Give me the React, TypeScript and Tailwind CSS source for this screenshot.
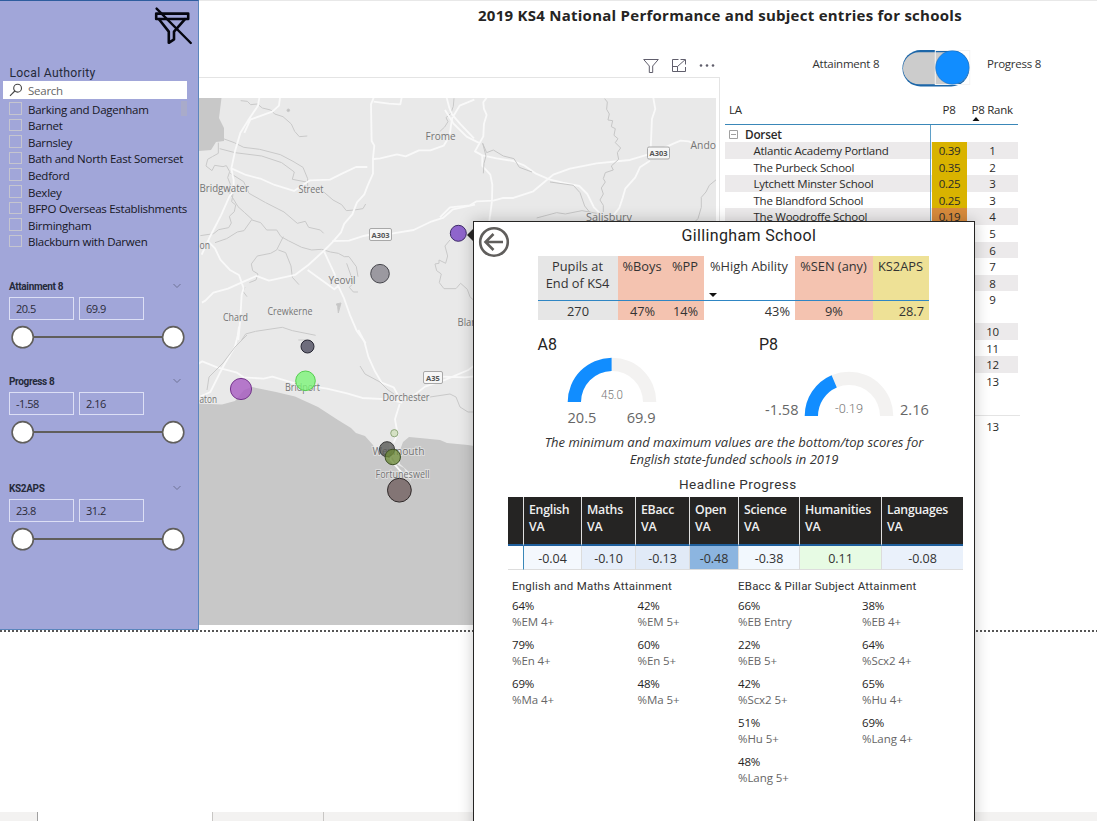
import type { ReactNode } from "react";

const authorities = [
  "Barking and Dagenham",
  "Barnet",
  "Barnsley",
  "Bath and North East Somerset",
  "Bedford",
  "Bexley",
  "BFPO Overseas Establishments",
  "Birmingham",
  "Blackburn with Darwen",
];

function ClearFilterIcon() {
  return (
    <svg width="40" height="40" viewBox="0 0 40 40" fill="none" stroke="#05060f" strokeWidth="2.6" strokeLinejoin="round" strokeLinecap="round">
      <rect x="3.2" y="7.6" width="32" height="5.4" />
      <path d="M6 13.200l9.800 12.400v11.2l5.200-3.400v-7.800L32 13.200" />
      <path d="M3.600 2.600l34.200 34.400" strokeWidth="2.4" />
    </svg>
  );
}

function Slicer({ title, min, max, className }: { title: string; min: string; max: string; className: string }) {
  return (
    <div className={`flex flex-col pl-[9px] ${className}`}>
      <div className="flex h-[14px] items-center justify-between pr-[16px]">
        <span className="font-['Roboto',sans-serif] text-[10px] font-bold tracking-[-0.35px] text-[#252a3a]">{title}</span>
        <svg width="10" height="6" viewBox="0 0 10 6" fill="none" stroke="#6f7396" strokeWidth="1">
          <path d="M1.5 1L5 4.5 8.5 1" />
        </svg>
      </div>
      <div className="mt-1 flex gap-[5px]">
        {[min, max].map((v) => (
          <div key={v} className="flex h-[23px] w-[65px] items-center border border-[#dcdff5] pl-[6px] text-[11px] tracking-[-0.5px] text-[#2b2b3a]">
            {v}
          </div>
        ))}
      </div>
      <svg className="mt-[5px]" width="180" height="24" viewBox="0 0 180 24">
        <path d="M14 12h150" stroke="#605e5c" strokeWidth="2" />
        <circle cx="13.7" cy="12.2" r="10.6" fill="#fff" stroke="#605e5c" strokeWidth="1.6" />
        <circle cx="164.2" cy="12.2" r="10.6" fill="#fff" stroke="#605e5c" strokeWidth="1.6" />
      </svg>
    </div>
  );
}

function Sidebar() {
  return (
    <aside className="flex h-[630px] w-[199px] shrink-0 flex-col border-t border-r border-b border-[#5b86bd] border-t-[#2e5d9e] bg-[#a1a6d9]">
      <div className="flex justify-end pt-[5px] pr-[5px]">
        <ClearFilterIcon />
      </div>
      <div className="mt-[19px] h-[16px] pl-[9.5px] font-['Roboto',sans-serif] text-[12.2px] leading-[16px] tracking-[0.3px] text-[#252a3a]">Local Authority</div>
      <div className="ml-[3px] flex h-[18px] w-[184px] items-center bg-white pl-[6px]">
        <svg width="14" height="14" viewBox="0 0 14 14" fill="none" stroke="#444" strokeWidth="1.1">
          <circle cx="8.6" cy="5.2" r="3.9" />
          <path d="M5.8 8L1 12.8" />
        </svg>
        <span className="ml-[5px] pt-px text-[11.5px] tracking-[-0.25px] text-[#666]">Search</span>
      </div>
      <div className="mt-[2px] flex justify-between pr-[11px]">
        <ul className="pl-[9px]">
          {authorities.map((a) => (
            <li key={a} className="flex h-[16.6px] items-center text-[11.5px] tracking-[-0.26px] whitespace-nowrap text-[#16161f]">
              <span className="relative -top-px mr-[6.5px] h-[12.5px] w-[12.5px] border border-[#c5c5cf]" />
              {a}
            </li>
          ))}
        </ul>
        <div className="-ml-2 h-[15px] w-[6px] bg-[#a9abca]" />
      </div>
      <Slicer title="Attainment 8" min="20.5" max="69.9" className="mt-[29px]" />
      <Slicer title="Progress 8" min="-1.58" max="2.16" className="mt-[25px]" />
      <Slicer title="KS2APS" min="23.8" max="31.2" className="mt-[37px]" />
    </aside>
  );
}

const towns: [string, number, number, number][] = [
  ["Frome", 425.5, 140, 30],
  ["Ando", 690.5, 149, 25.5],
  ["Bridgwater", 199.5, 191.5, 49.5],
  ["Street", 298.5, 192.5, 25],
  ["Salisbury", 586, 220.5, 46],
  ["on", 199.5, 249, 10.5],
  ["Yeovil", 328.5, 284, 27],
  ["Crewkerne", 267.5, 315, 45],
  ["Chard", 223, 320.5, 25],
  ["Blandford", 457.5, 325.5, 44],
  ["Bridport", 285, 390.5, 35],
  ["aton", 199.5, 402.5, 17.5],
  ["Dorchester", 382.5, 401, 47],
  ["Weymouth", 372.5, 454.5, 52],
  ["Fortuneswell", 375.5, 478, 54],
];

const shields: [string, number, number, number][] = [
  ["A303", 369.5, 228.5, 22],
  ["A303", 647.5, 147, 22],
  ["A35", 423.5, 371.5, 19],
];

const schools: [number, number, number, string, string][] = [
  [458.3, 233.3, 8, "#7640c4", "#3d2a68"],
  [380, 273.7, 9.3, "#85838c", "#46464c"],
  [307.5, 346.5, 6.5, "#4c4a5e", "#262633"],
  [241, 389, 10.6, "#a658c2", "#74348c"],
  [305.5, 380.8, 9.8, "#7af576", "#55cf50"],
  [394.3, 433.2, 3.6, "#cfdfba", "#8fa77c"],
  [387, 449.2, 7.5, "#555652", "#383838"],
  [392.8, 457, 7.7, "#6d8a38", "#3f5127"],
  [399.4, 490.2, 11.9, "#6f5d5d", "#302a2a"],
];

function SchoolMap() {
  return (
    <svg width="517" height="527" viewBox="199 98 517 527" className="bg-[#e9e9e9]">
      <g fill="#c8c8c8">
        <path d="M199 98h22.5l-2.500 20 5 10v13l-8 1-5 8-12 1z" />
        <path d="M199 403.500L222 404.500L235 401 244 390 252 387 276 392 295 396.500 318 407 338 420 351 428 356 433 365 436 373 445 376 451 391 455 394 460 396 464 404 468 411 482 409 472 400 464 399 453 403 442 409 437 420 438 440 440 447 443 468 445 480 447V626H199z" />
      </g>
      <g transform="translate(195 50) scale(.3333)" fill="none" stroke="#c9c9c9" strokeWidth="3" strokeLinejoin="round">
        <path d="M137 152l20 2 10 10 20-2 15 12 25 6 12 12 25 8 25 22 10 22 14 16 24-2M85 266l33 12 28 14 48 6 62 16 38 20 30 18 14 34 0 22M74 296l46 12 80 10 60 20 38 28-6 22 42 8M70 278l0 32-18 10-14 8-5 20 18 14 8-16 25 4 10-3 10 18-6 18 8 20 -10 22 18 8-4 22 12 10-4 20-15 14 6 20-8 14-30 6-15 12-40 6M106 370l40 25 16 35 50 28 55 28 40 34 24-6 10 18 35 8 10 10M105 430l24 40 20 18 22 20-24 34-20 4-32 20-35 12M171 510l26 8 18 22 30 0 13 20 22 12 40 20 30 8 30-2 26 8 24 4 18 10 14 0 22 30 5 30M265 560l-20 40-18 10-40 8-18 24 4 20 16 10-6 18-20 8M250 600l22 8 16 40 4 34 20 22M384 424l30 26 26 14 14 18 24-2 26-4 8-14M455 640l14 40 4 22-10 10 12 14h14M777 145l-2 24-8 22-14 12 6 12-10 16-15 14M765 570l-15 18 8 30-6 22-20-10 0 10-12 2 5 20 14 10-6 26 14 18 36 0 14-16 20 18 8 22 14 14M140 870l12-18 30-8 80-12 30 10 70 14M310 870l25 0M150 712l-6 12 12 16" />
        <path d="M424 762l14-3-8 30-2-19z" fill="#c6c6c6" />
        <circle cx="280" cy="181" r="4" fill="#c0c0c0" />
      </g>
      <g transform="translate(195 50) scale(.3333)" fill="none" stroke="#f9f9f9" strokeWidth="5.500" strokeLinejoin="round">
        <path d="M193 143l-4 24-27 40-26 42-16 55-11 52 7 34 0 32-14 20-24 54-32 62-26 56M255 143l-3 24-20 18-66 24-18 40M109 355l44 20 46 12 40 18 58 18 48-32 60-2 36-18 42-20h34M536 143l-8 20 2 110 8 14-4 38 0 46-16 36-10 26-22 24-14 36-24 28-10 26-26 30-26 26-46 42-40 30-78 17-38-14-45 20-40 18-44 12-24 24-10 6M536 155l46 6 34 2 4-20M536 327l20-2 50-12 26 6 40-18 34 0 40-14 18-30 4-30 4-24 22-36 44-18M755 143l8 30 8 20 26 30 40 42M412 573l50-1 44-14 30-6 58-2 62-10 50-24 38-12 30-26 66-14M40 575l20 20 16 34 30 32 26 14 14 40-6 20-4 70-6 65M388 606l12 26 18 38 8 30 20 42 20 56 20 46 26 36M338 660l80 58 14-12" />
        <g transform="translate(0 840)">
          <path d="M132-10l-4 28-8 32-30 50-16 30-28 56-30 14M0 108l22-14 44 18 60 16 20 14 60 4 26-6 80 24 84 12 60 14 46 14 80 4 40 10M490 0l18 34 12 46 20 44 20 34 36 14 12 22 4 20 48-20 30-24 60-20 70-30 40-30M740 140l70 2 40-4M614 222l-14 46 8 44-12 26M585 340l2 50 26 30 14 14" />
        </g>
        <g transform="translate(735 0)">
          <path d="M140 143l-10 14 2 20 8 18-8 26-2 38-25 45 22 12 0 32 24 26 6 30-1 50-8 60M15 180l25 40 40 40 40 20M127 316l43 9 50 8 34 14 34 24 40 17 40 10 50 10 24 24 20 40 22 22M0 502l30-30 60-6 20-12 50-2 30-8h30l60-20 36-30 24-20 50-18 80-16 100-10 66-20 66-30 20-8 24 2 20 8 30 4 20 6 20-6M640 143l6 34-10 30-4 92M630 332l-30 20-14 30-30 34-8 28-10 30-18 22" />
        </g>
      </g>
      <g transform="translate(440 50) scale(.3333)" fill="none" stroke="#c6c6c6" strokeWidth="3">
        <path d="M494 146l8 10-2 22 8 14-4 18 14 2-4 18 12 6-4 20 12 10-8 12 16 16-10 14 4 20-22 20 6 12-24 8-6 18 6 10-12 18 6 18-10 18 10 16 0 20M130 370l2-30 6-22-10-38 12 28 20-8 30 18 32 8 16 26 38 14M330 396l70 10 20 22 14 40 16 20M830 388l-22 18-10 20-14 16 0 30-10 34-10 10M290 504l60-16 26 4 50-10 44 8" />
      </g>
      <path d="M360 366l5 8 15 8 8 8 6 4M430 397l20-3 6 3 4 10 8 5 5 0M207 390l2-13 14-14 12-16 12-12" fill="none" stroke="#c9c9c9" />
      <g fontFamily="'Open Sans', sans-serif" fontSize="10" fill="#757575" stroke="#ececec" strokeWidth="2" strokeOpacity=".6" paintOrder="stroke">
        {towns.map(([n, x, y, w]) => (
          <text key={n} x={x} y={y} textLength={w} lengthAdjust="spacingAndGlyphs">{n}</text>
        ))}
      </g>
      {shields.map(([n, x, y, w]) => (
        <g key={x}>
          <rect x={x} y={y} width={w} height="12" rx="1.500" fill="#f6f6f6" stroke="#a8a8a8" />
          <text x={x + w / 2} y={y + 9} textAnchor="middle" fontSize="7.500" fontWeight="700" fontFamily="'Open Sans', sans-serif" fill="#555">{n}</text>
        </g>
      ))}
      {schools.map(([x, y, r, fill, stroke]) => (
        <circle key={x} cx={x} cy={y} r={r} fill={fill} fillOpacity=".78" stroke={stroke} strokeWidth="1" />
      ))}
    </svg>
  );
}

function MapPanel() {
  return (
    <section className="flex w-[521px] shrink-0 flex-col">
      <div className="mt-[51px] flex h-[25px] items-center justify-end gap-[13px] pr-[5px] pt-[4px]">
        <svg width="16" height="14" viewBox="0 0 16 14" fill="none" stroke="#605e6c">
          <path d="M.7.500h14.600L9.700 7v6.500H6.300V7z" />
        </svg>
        <svg width="14" height="13" viewBox="0 0 14 13" fill="none" stroke="#605e6c">
          <path d="M6.500.500H.500v12h13V8M.500 7.500h5v5M5.500 7.500L13 .800M8.500.500h5v5" />
        </svg>
        <svg width="16" height="4" viewBox="0 0 16 4" fill="#605e6c">
          <circle cx="2" cy="1.500" r="1.300" />
          <circle cx="8" cy="1.500" r="1.300" />
          <circle cx="14" cy="1.500" r="1.300" />
        </svg>
      </div>
      <div className="mt-px flex h-[551px] flex-col border-t border-r border-[#e4e4e4] pt-[20px]">
        <SchoolMap />
      </div>
    </section>
  );
}

const ranks: { name: string; p8: string; rank: string; h: string; cell: string }[] = [
  { name: "Atlantic Academy Portland", p8: "0.39", rank: "1", h: "h-[16.6px]", cell: "bg-[#d9b300]" },
  { name: "The Purbeck School", p8: "0.35", rank: "2", h: "h-[16.6px]", cell: "bg-[#d9b300]" },
  { name: "Lytchett Minster School", p8: "0.25", rank: "3", h: "h-[16.6px]", cell: "bg-[#d9b300]" },
  { name: "The Blandford School", p8: "0.25", rank: "3", h: "h-[16.6px]", cell: "bg-[#d9b300]" },
  { name: "The Woodroffe School", p8: "0.19", rank: "4", h: "h-[16.6px]", cell: "bg-[#d88b3c]" },
  { name: "", p8: "", rank: "5", h: "h-[16.6px]", cell: "" },
  { name: "", p8: "", rank: "6", h: "h-[16.6px]", cell: "" },
  { name: "", p8: "", rank: "7", h: "h-[16.6px]", cell: "" },
  { name: "", p8: "", rank: "8", h: "h-[16.6px]", cell: "" },
  { name: "", p8: "", rank: "9", h: "h-[31.6px]", cell: "" },
  { name: "", p8: "", rank: "10", h: "h-[16.6px]", cell: "" },
  { name: "", p8: "", rank: "11", h: "h-[16.6px]", cell: "" },
  { name: "", p8: "", rank: "12", h: "h-[16.6px]", cell: "" },
  { name: "", p8: "", rank: "13", h: "h-[42px]", cell: "" },
];

function RankTable() {
  return (
    <div className="w-[293px] text-[11.5px] leading-[17.6px] tracking-[-0.25px] text-[#2b2a29]">
      <div className="flex h-[24px] border-b-[1.5px] border-[#3a87b8] leading-[16.6px]">
        <div className="w-[206px] pt-px pl-[4px]">LA</div>
        <div className="w-[36px] pt-px text-center">P8</div>
        <div className="w-[51px] pt-px pl-[4.5px] whitespace-nowrap">
          P8 Rank
          <svg width="8" height="4" viewBox="0 0 8 4" className="-mt-[2px]">
            <path d="M.5 4L4 0l3.500 4z" fill="#111" />
          </svg>
        </div>
      </div>
      <div className="flex h-[17px] items-center">
        <div className="flex h-full w-[206px] items-center border-r border-[#5fa0c8] pt-[2px] pl-[4px]">
          <svg width="9" height="9" viewBox="0 0 9 9" fill="none" stroke="#a0a0a0">
            <path d="M.5.500h8v8h-8zM2 4.500h5" />
          </svg>
          <span className="ml-[7px] text-[11.8px] font-semibold">Dorset</span>
        </div>
      </div>
      {ranks.map((r, i) => (
        <div key={i} className={`flex ${r.h} ${i % 2 === 0 ? "bg-[#eceaeb]" : "bg-white"}`}>
          <div className="w-[206px] border-r border-[#5fa0c8] pl-[28.5px] whitespace-nowrap">{r.name}</div>
          <div className={`ml-px w-[35px] text-center ${r.cell}`}>{r.p8}</div>
          <div className="w-[51px] text-center">{r.rank}</div>
        </div>
      ))}
      <div className="flex w-[295px] justify-end border-t border-[#e4e4e4] pt-[2px] pr-[2px]">
        <div className="w-[51px] text-center">13</div>
      </div>
    </div>
  );
}

function RankPanel() {
  return (
    <section className="flex grow flex-col pl-[5px]">
      <div className="mt-[48px] flex pl-[87px] text-[11.5px] tracking-[-0.24px] text-[#333]">
        <span className="w-[90px] pt-[7px] pl-[0.5px]">Attainment 8</span>
        <svg width="69" height="39" viewBox="0 0 69 39">
          <rect x=".4" y="2" width="67" height="36.500" rx="18.200" fill="#1c66a8" />
          <rect x="1" y="4.300" width="66" height="32" rx="16" fill="#ccc" />
          <rect x="33.300" y="2.500" width="34.500" height="34" fill="none" stroke="#f3f3f3" />
          <circle cx="50.400" cy="19.500" r="16.700" fill="#118dff" stroke="#1a6fc0" strokeWidth=".6" />
        </svg>
        <span className="ml-[16px] pt-[7px]">Progress 8</span>
      </div>
      <div className="mt-[14px]">
        <RankTable />
      </div>
    </section>
  );
}

const pupilCols: { head: ReactNode; value: string; cls: string; align: string }[] = [
  { head: <>Pupils at<br />End of KS4</>, value: "270", cls: "w-[80px] bg-[#e6e6e6]", align: "text-center" },
  { head: "%Boys", value: "47%", cls: "w-[49px] bg-[#f4c3b0]", align: "text-center" },
  { head: "%PP", value: "14%", cls: "w-[37px] bg-[#f4c3b0]", align: "text-center" },
  { head: "%High Ability", value: "43%", cls: "w-[91px]", align: "pr-[5px] text-right" },
  { head: "%SEN (any)", value: "9%", cls: "w-[78px] bg-[#f4c3b0]", align: "text-center" },
  { head: "KS2APS", value: "28.7", cls: "w-[56px] bg-[#eee196]", align: "pr-[5px] text-right" },
];

function PupilTable() {
  return (
    <div className="flex h-[64px] w-[391px] text-[12.8px] tracking-[0px] text-[#333]">
      {pupilCols.map((c, i) => (
        <div key={i} className={`flex flex-col whitespace-nowrap ${c.cls}`}>
          <div className="relative h-[45px] border-b border-[#2f86c4] pt-[2px] pr-px text-center leading-[17px]">
            {c.head}
            {c.value === "43%" && (
              <svg width="8" height="5" viewBox="0 0 8 5" className="absolute bottom-[2px] left-[5px]">
                <path d="M0 0h8L4 4z" fill="#111" />
              </svg>
            )}
          </div>
          <div className={`pt-[2px] leading-[17px] ${c.align}`}>{c.value}</div>
        </div>
      ))}
    </div>
  );
}

function Gauge({ path, value }: { path: string; value: string }) {
  return (
    <svg width="90" height="46" viewBox="-45 -45 90 46">
      <path d="M-44.300 0A44.300 44.300 0 0 1 44.300 0H31A31 31 0 0 0-31 0z" fill="#f3f2f1" />
      <path d={path} fill="#118dff" />
      <text x="0" y="-3" textAnchor="middle" fontSize="12.500" textLength={value.length > 4 ? 28 : 22} lengthAdjust="spacingAndGlyphs" fontFamily="Roboto, sans-serif" fontWeight="300" fill="#777">
        {value}
      </text>
    </svg>
  );
}

const headline: [string, string, string, string][] = [
  ["English", "-0.04", "w-[58px]", "bg-[#f4f8fd]"],
  ["Maths", "-0.10", "w-[54px]", "bg-[#e6eefa]"],
  ["EBacc", "-0.13", "w-[54px]", "bg-[#e1eaf7]"],
  ["Open", "-0.48", "w-[49px]", "bg-[#8cb5e0]"],
  ["Science", "-0.38", "w-[61px]", "bg-[#f2f8fe]"],
  ["Humanities", "0.11", "w-[82px]", "bg-[#e7fbe4]"],
  ["Languages", "-0.08", "w-[82px]", "bg-[#eaf1fb]"],
];

function HeadlineTable() {
  return (
    <div className="flex w-[455px] text-[12.5px] whitespace-nowrap">
      <div className="w-[15px] shrink-0">
        <div className="h-[49px] border-b-2 border-[#1f5f9c] bg-[#252423]" />
        <div className="h-[24px] border-b border-[#ddd]" />
      </div>
      {headline.map(([name, value, w, bg], i) => (
        <div key={name} className={`shrink-0 ${w}`}>
          <div className="h-[49px] border-b-2 border-l border-b-[#1f5f9c] border-l-[#e0e0e0] bg-[#252423] pt-[4px] pl-[5px] text-[12.3px] leading-[17px] font-semibold tracking-[-0.25px] text-[#f0f0f0]">
            {name}
            <br />
            VA
          </div>
          <div className={`h-[24px] border-b border-l border-b-[#ddd] text-center leading-[26px] text-[#333] ${i === 0 ? "border-l-[#3a87b8]" : "border-l-[#dcdcdc]"} ${bg}`}>{value}</div>
        </div>
      ))}
    </div>
  );
}

function Metrics({ title, items, cols }: { title: string; items: [string, string][]; cols: string }) {
  return (
    <div>
      <div className="h-[18px] font-['Roboto',sans-serif] text-[11.5px] leading-[18px] tracking-[0.22px] whitespace-nowrap text-[#333]">{title}</div>
      <div className={`grid ${cols}`}>
        {items.map(([v, l]) => (
          <div key={l} className="h-[39px] pt-[3px] text-[11.5px] leading-[16px] tracking-[-0.08px] whitespace-nowrap">
            <div className="tracking-[-0.2px] text-[#252423]">{v}</div>
            <div className="text-[#666]">{l}</div>
          </div>
        ))}
      </div>
    </div>
  );
}

function SchoolTooltip() {
  return (
    <div className="absolute top-[221px] left-[473px] h-[620px] w-[502px] border border-[#252423] bg-white shadow-[0_0_14px_rgba(0,0,0,0.22)]">
      <svg width="7" height="14" viewBox="0 0 7 14" className="absolute top-[6px] -left-[7px]">
        <path d="M7 0L0 7l7 7z" fill="#252423" />
      </svg>
      <div className="flex h-[34px]">
        <svg width="32" height="32" viewBox="0 0 32 32" className="mt-[4px] ml-[4px]" fill="none" stroke="#605e5c" strokeWidth="2.600">
          <circle cx="16" cy="16" r="13.800" />
          <path d="M25 16H8M15.500 8L7.500 16l8 8" />
        </svg>
        <h2 className="ml-[171.500px] pt-[2px] font-['Roboto',sans-serif] text-[16px] leading-[24px] tracking-[0.36px] text-[#252423]">Gillingham School</h2>
      </div>
      <div className="pl-[64px]">
        <PupilTable />
      </div>
      <div className="flex h-[114px] pl-[63.500px] text-[#252423]">
        <div className="w-[221.500px]">
          <div className="h-[36px] pt-[13px] font-['Roboto',sans-serif] text-[16px] leading-[24px]">A8</div>
          <div className="flex w-[91px] flex-col pt-px pl-[29px]">
            <Gauge path="M-44.300 0A44.300 44.300 0 0 1-.4-44.300V-31A31 31 0 0 0-31 0z" value="45.0" />
            <div className="flex w-[90px] justify-between px-px text-[14.600px] leading-[28px] text-[#666]">
              <span>20.5</span>
              <span>69.9</span>
            </div>
          </div>
        </div>
        <div>
          <div className="h-[36px] pt-[13px] font-['Roboto',sans-serif] text-[16px] leading-[24px]">P8</div>
          <div className="flex items-end pt-[15px] pl-[6px] text-[14.600px] leading-[24px] text-[#666]">
            <span className="mb-[-4px] w-[39px]">-1.58</span>
            <Gauge path="M-44.300 0A44.300 44.300 0 0 1-17.400-40.700L-12.200-28.500A31 31 0 0 0-31 0z" value="-0.19" />
            <span className="mb-[-4px] ml-[6px]">2.16</span>
          </div>
        </div>
      </div>
      <p className="h-[34px] pl-[20px] text-center text-[13px] leading-[17px] text-[#333] italic">
        The minimum and maximum values are the bottom/top scores for
        <br />
        English state-funded schools in 2019
      </p>
      <div className="mt-[4px] h-[25px] pl-[205px] font-['Roboto',sans-serif] text-[13.5px] leading-[24px] tracking-[0.45px] text-[#333]">Headline Progress</div>
      <div className="pl-[34px]">
        <HeadlineTable />
      </div>
      <div className="mt-[7px] flex pl-[38px]">
        <div className="w-[226px]">
          <Metrics
            title="English and Maths Attainment"
            cols="grid-cols-[125.5px_100px]"
            items={[["64%", "%EM 4+"], ["42%", "%EM 5+"], ["79%", "%En 4+"], ["60%", "%En 5+"], ["69%", "%Ma 4+"], ["48%", "%Ma 5+"]]}
          />
        </div>
        <Metrics
          title="EBacc & Pillar Subject Attainment"
          cols="grid-cols-[124px_100px]"
          items={[["66%", "%EB Entry"], ["38%", "%EB 4+"], ["22%", "%EB 5+"], ["64%", "%Scx2 4+"], ["42%", "%Scx2 5+"], ["65%", "%Hu 4+"], ["51%", "%Hu 5+"], ["69%", "%Lang 4+"], ["48%", "%Lang 5+"]]}
        />
      </div>
    </div>
  );
}

export default function App() {
  return (
    <div className="relative flex h-[821px] w-[1097px] flex-col overflow-hidden bg-white font-['Open_Sans','Noto_Sans',sans-serif]">
      <div className="flex h-[630px]">
        <Sidebar />
        <MapPanel />
        <RankPanel />
      </div>
      <div className="h-[2px] bg-[repeating-linear-gradient(90deg,#555_0_2px,transparent_2px_4px)]" />
      <div className="grow" />
      <div className="flex h-[9px] bg-[#f3f2f1]">
        <div className="w-[38px] border-r border-[#a0a0a0]" />
        <div className="w-[175px] border-r border-[#c8c6c4] bg-white" />
        <div className="w-[111px] border-r border-[#c8c6c4]" />
      </div>
      <h1 className="absolute top-0 left-[199px] w-[898px] border-t border-[#e8e8e8] pt-[4px] pl-[279px] text-[15px] leading-[21px] font-bold tracking-[0.26px] whitespace-nowrap text-[#252423]">
        2019 KS4 National Performance and subject entries for schools
      </h1>
      <SchoolTooltip />
    </div>
  );
}
